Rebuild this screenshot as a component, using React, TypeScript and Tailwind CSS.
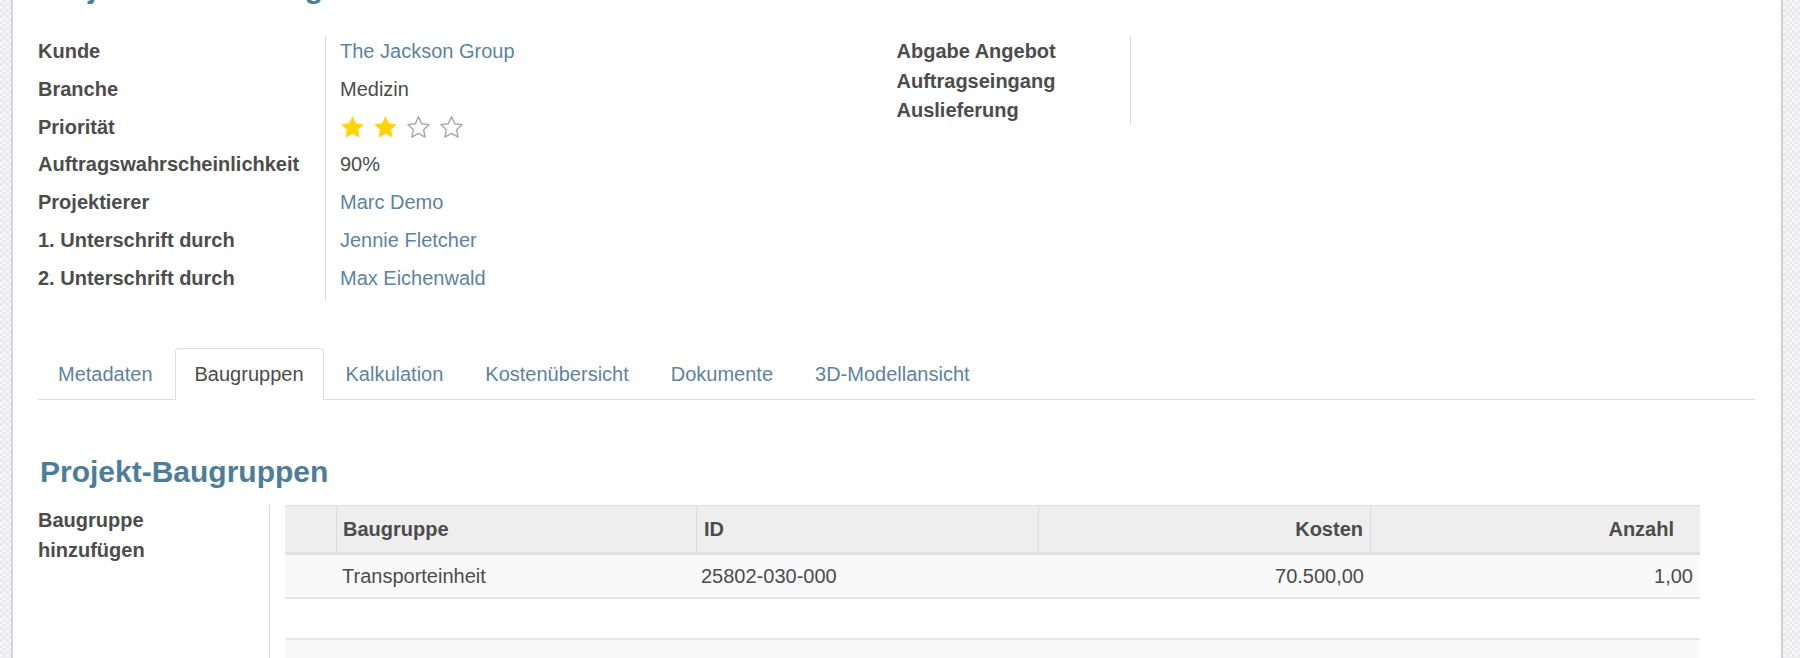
import React from "react";

function Star({ filled }: { filled: boolean }) {
  return (
    <svg width="25" height="24" viewBox="0 0 25 24" className="mr-[8px] shrink-0">
      <path
        d="M12.5 1.8l3.2 6.9 7.4.9-5.5 5.1 1.5 7.4-6.6-3.7-6.6 3.7 1.5-7.4-5.5-5.1 7.4-.9z"
        fill={filled ? "#FFD400" : "none"}
        stroke={filled ? "#FFD400" : "#a3a6ad"}
        strokeWidth={filled ? 0.8 : 1.4}
        strokeLinejoin="round"
      />
    </svg>
  );
}

const leftRows: { label: string; value: React.ReactNode }[] = [
  { label: "Kunde", value: <span className="text-[#5e83a0]">The Jackson Group</span> },
  { label: "Branche", value: <span className="text-[#4c4c4c]">Medizin</span> },
  {
    label: "Priorität",
    value: (
      <span className="flex items-center pt-[2px]">
        <Star filled />
        <Star filled />
        <Star filled={false} />
        <Star filled={false} />
      </span>
    ),
  },
  { label: "Auftragswahrscheinlichkeit", value: <span className="text-[#4c4c4c]">90%</span> },
  { label: "Projektierer", value: <span className="text-[#5e83a0]">Marc Demo</span> },
  { label: "1. Unterschrift durch", value: <span className="text-[#5e83a0]">Jennie Fletcher</span> },
  { label: "2. Unterschrift durch", value: <span className="text-[#5e83a0]">Max Eichenwald</span> },
];

const rightRows = ["Abgabe Angebot", "Auftragseingang", "Auslieferung"];

const tabs = ["Metadaten", "Baugruppen", "Kalkulation", "Kostenübersicht", "Dokumente", "3D-Modellansicht"];

export default function App() {
  return (
    <div className="flex h-[658px] w-full overflow-hidden bg-white font-['Liberation_Sans',Arial,sans-serif] text-[20px] text-[#4c4c4c]">
      <div className="w-[13px] shrink-0 border-r-2 border-[#d3d3dd] bg-[repeating-conic-gradient(#e9e9ec_0%_25%,#f6f6f7_0%_50%)] bg-[length:6px_6px]" />
      <div className="flex min-w-0 flex-1 flex-col pl-[25px] pr-[26px]">
        {/* Title, scrolled off the top; only descenders remain visible */}
        <div className="-mt-[30px] h-[36px] whitespace-nowrap text-[30px] font-bold leading-[36px] text-[#4d7d98]">
          Projektbezeichnung
        </div>

        {/* Form groups */}
        <div className="mt-[30px] flex">
          <div className="w-1/2">
            {leftRows.map((r) => (
              <div key={r.label} className="flex h-[37.8px]">
                <div className="w-[288px] shrink-0 border-r border-[#d9d9d9] pt-[1px] font-bold leading-[29px] text-[#4c4c4c]">
                  {r.label}
                </div>
                <div className="flex items-start pl-[14px] pt-[1px] leading-[29px]">{r.value}</div>
              </div>
            ))}
          </div>
          <div className="w-1/2">
            {rightRows.map((l) => (
              <div key={l} className="flex h-[29.7px]">
                <div className="w-[234px] shrink-0 border-r border-[#d9d9d9] pt-[1px] font-bold leading-[29px] text-[#4c4c4c]">
                  {l}
                </div>
                <div className="flex-1" />
              </div>
            ))}
          </div>
        </div>

        {/* Tabs */}
        <div className="mt-[47px] flex border-b border-[#dddddd]">
          {tabs.map((t) => {
            const active = t === "Baugruppen";
            return (
              <div
                key={t}
                className={
                  active
                    ? "-mb-px mr-[2px] flex h-[52px] items-center rounded-t-[4px] border border-[#dddddd] border-b-white bg-white px-[19px] text-[#4c4c4c]"
                    : "-mb-px mr-[2px] flex h-[52px] items-center rounded-t-[4px] border border-transparent px-[19px] text-[#5e83a0]"
                }
              >
                {t}
              </div>
            );
          })}
        </div>

        {/* Section heading */}
        <div className="mt-[54px] h-[36px] pl-[2px] text-[30px] font-bold leading-[36px] text-[#4d7d98]">
          Projekt-Baugruppen
        </div>

        {/* Baugruppen section */}
        <div className="mt-[15px] flex flex-1">
          <div className="w-[232px] shrink-0 border-r border-[#d9d9d9] font-bold leading-[30.5px] text-[#4c4c4c]">
            Baugruppe
            <br />
            hinzufügen
          </div>
          <div className="ml-[15px] w-[1415px] shrink-0">
            <div className="grid h-[50px] grid-cols-[51px_360px_342px_332px_330px] border-t border-b-[3px] border-t-[#dcdcdc] border-b-[#dfe1e4] bg-[#eeeeee] font-bold text-[#4c4c4c]">
              <div />
              <div className="flex items-center border-l border-[#dcdcdc] pl-[6px]">Baugruppe</div>
              <div className="flex items-center border-l border-[#dcdcdc] pl-[7px]">ID</div>
              <div className="flex items-center justify-end border-l border-[#dcdcdc] pr-[7px]">Kosten</div>
              <div className="flex items-center justify-end border-l border-[#dcdcdc] pr-[26px]">Anzahl</div>
            </div>
            <div className="grid h-[44px] grid-cols-[51px_360px_342px_332px_330px] border-b-2 border-[#e6e6e6] bg-[#f9f9f9] text-[#4c4c4c]">
              <div />
              <div className="flex items-center pl-[6px]">Transporteinheit</div>
              <div className="flex items-center pl-[5px]">25802-030-000</div>
              <div className="flex items-center justify-end pr-[6px]">70.500,00</div>
              <div className="flex items-center justify-end pr-[7px]">1,00</div>
            </div>
            <div className="h-[41px] border-b-2 border-[#e6e6e6] bg-white" />
            <div className="h-[60px] bg-[#f9f9f9]" />
          </div>
        </div>
      </div>
      <div className="w-[19px] shrink-0 border-l-2 border-[#cfcfda] bg-[repeating-conic-gradient(#e9e9ec_0%_25%,#f6f6f7_0%_50%)] bg-[length:6px_6px]" />
    </div>
  );
}
